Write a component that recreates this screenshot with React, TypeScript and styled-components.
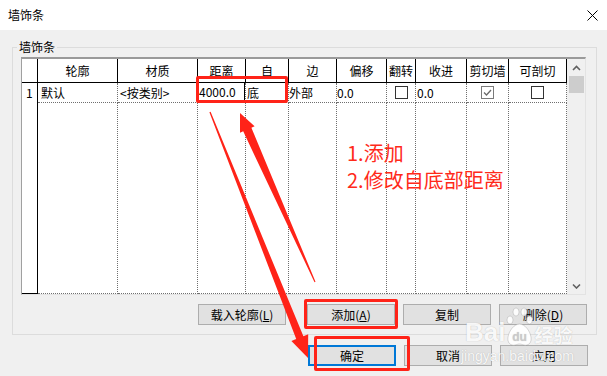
import styled, { createGlobalStyle } from "styled-components";

const GlobalStyle = createGlobalStyle`
  html, body {
    margin: 0;
    padding: 0;
    background: #f0f0f0;
  }
  body {
    font-family: "Noto Sans CJK SC", "Microsoft YaHei", sans-serif;
    font-size: 12px;
    color: #000;
  }
  * {
    box-sizing: border-box;
  }
`;

const Window = styled.div`
  position: relative;
  width: 607px;
  height: 376px;
  background: #f0f0f0;
  overflow: hidden;
`;

const TitleBar = styled.div`
  height: 30px;
  background: #fff;
  display: flex;
  align-items: center;
  justify-content: space-between;
  padding: 0 9px 0 8px;
  font-size: 12px;
  line-height: 14px;
`;

const Content = styled.div`
  padding: 10px 10px 0 12px;
`;

const GroupBox = styled.fieldset`
  margin: 0;
  width: 585px;
  min-width: 0;
  padding: 3px 10px 9px 8px;
  border: 1px solid #dcdcdc;
`;

const GroupLegend = styled.legend`
  margin-left: -4px;
  padding: 0 2px;
  font-size: 12px;
  line-height: 14px;
`;

const GridFrame = styled.div`
  display: flex;
  width: 565px;
  border-style: solid;
  border-width: 2px 1px 1px 1px;
  border-color: #9a9a9a #e3e3e3 #e3e3e3 #a0a0a0;
  background: #fff;
`;

const Table = styled.div`
  display: grid;
  grid-template-columns: 16px 80px 80px 48px 43px 48px 50px 29px 51px 42px 58px;
  grid-template-rows: 24px 20px 191px;
  width: 545px;
`;

const HeadCell = styled.div`
  border-right: 1px solid #000;
  border-bottom: 1px solid #000;
  text-align: center;
  line-height: 23px;
  white-space: nowrap;
  overflow: hidden;
`;

const RowHead = styled.div<{ $last?: boolean }>`
  border-right: 1px solid #000;
  border-bottom: ${(p) => (p.$last ? "1px solid #000" : "none")};
  padding-left: 4px;
  line-height: 19px;
`;

const Cell = styled.div<{ $pad?: number; $center?: boolean }>`
  display: flex;
  align-items: center;
  justify-content: ${(p) => (p.$center ? "center" : "flex-start")};
  border-right: 1px dotted #6f6f6f;
  border-bottom: 1px dotted #6f6f6f;
  padding-left: ${(p) => (p.$center ? 0 : p.$pad ?? 2)}px;
  line-height: 19px;
  white-space: nowrap;
`;

const EditBox = styled.div`
  align-self: flex-start;
  width: 49px;
  height: 20px;
  margin: -1px 0 0 -1px;
  padding-left: 1px;
  border: 1px solid #000;
  background: #fff;
  line-height: 18px;
`;

const CheckBox = styled.span<{ $checked?: boolean }>`
  display: inline-flex;
  align-items: center;
  justify-content: center;
  width: 13px;
  height: 13px;
  border: 1px solid ${(p) => (p.$checked ? "#7a7a7a" : "#333")};
  background: #fff;
`;

const ScrollBar = styled.div`
  width: 18px;
  display: flex;
  flex-direction: column;
  background: #f0f0f0;
`;

const ScrollArrow = styled.div`
  height: 17px;
  display: flex;
  align-items: center;
  justify-content: center;
`;

const ScrollThumb = styled.div`
  height: 17px;
  margin: 0 1px 0 2px;
  background: #cdcdcd;
`;

const ScrollTrack = styled.div`
  flex: 1;
`;

const ButtonRow = styled.div`
  display: flex;
  justify-content: flex-end;
  gap: 8px;
  margin: 9px -1px 0 0;
`;

const FooterRow = styled.div`
  display: flex;
  justify-content: flex-end;
  gap: 8px;
  margin-top: 10px;
  padding-right: 9px;
`;

const Button = styled.button<{ $default?: boolean }>`
  width: 88px;
  height: 21px;
  padding: 0;
  background: #e1e1e1;
  border: ${(p) => (p.$default ? "2px solid #0078d7" : "1px solid #adadad")};
  font-family: inherit;
  font-size: 12px;
  line-height: 14px;
  color: #000;
`;

const LoadButton = styled(Button)`
  margin-right: 13px;
`;

const Overlay = styled.div`
  position: absolute;
  inset: 0;
  pointer-events: none;
`;

const RedBox = styled.div<{ $x: number; $y: number; $w: number; $h: number }>`
  position: absolute;
  left: ${(p) => p.$x}px;
  top: ${(p) => p.$y}px;
  width: ${(p) => p.$w}px;
  height: ${(p) => p.$h}px;
  border: 3px solid #ff2318;
  border-radius: 2px;
`;

const Note = styled.div`
  position: absolute;
  left: 347px;
  top: 139px;
  color: #ff2a1a;
  font-size: 20px;
  line-height: 27px;
  white-space: nowrap;
`;

const ArrowLayer = styled.svg`
  position: absolute;
  left: 0;
  top: 0;
`;

const Watermark = styled.div`
  position: absolute;
  left: 461px;
  top: 303px;
  display: flex;
  flex-direction: column;
  color: rgba(255, 255, 255, 0.92);
  text-shadow: 0 0 1px rgba(110, 110, 110, 0.45);
  font-family: "Liberation Sans", Arial, sans-serif;
`;

const WmTop = styled.div`
  display: flex;
  align-items: flex-end;
  height: 44px;
`;

const WmBai = styled.span`
  font-size: 26px;
  font-weight: bold;
  line-height: 26px;
  margin: 0 1px 2px 4px;
`;

const WmJing = styled.span`
  font-family: "Noto Sans CJK SC", sans-serif;
  font-size: 19px;
  line-height: 24px;
  font-weight: bold;
  margin: 0 0 0 1px;
`;

const WmUrl = styled.span`
  font-size: 14px;
  line-height: 18px;
  margin-top: 0;
`;

const headers = ["轮廓", "材质", "距离", "自", "边", "偏移", "翻转", "收进", "剪切墙", "可剖切"];

const Check = () => (
  <svg width="9" height="7" viewBox="0 0 9 7">
    <polyline points="1,3.5 3.5,6 8,1" fill="none" stroke="#6a6a6a" strokeWidth="1.3" />
  </svg>
);

const Chevron = ({ down }: { down?: boolean }) => (
  <svg width="9" height="6" viewBox="0 0 9 6">
    <polyline
      points={down ? "1,1.5 4.5,5 8,1.5" : "1,5 4.5,1.5 8,5"}
      fill="none"
      stroke="#606060"
      strokeWidth="1.6"
    />
  </svg>
);

const App = () => {
  return (
    <Window>
      <GlobalStyle />
      <TitleBar>
        <span>墙饰条</span>
        <svg width="11" height="11" viewBox="0 0 11 11">
          <path d="M0.5 0.5 L10.5 10.5 M10.5 0.5 L0.5 10.5" stroke="#000" strokeWidth="1" />
        </svg>
      </TitleBar>
      <Content>
        <GroupBox>
          <GroupLegend>墙饰条</GroupLegend>
          <GridFrame>
            <Table>
              <HeadCell />
              {headers.map((h) => (
                <HeadCell key={h}>{h}</HeadCell>
              ))}

              <RowHead>1</RowHead>
              <Cell $pad={3}>默认</Cell>
              <Cell $pad={2}>&lt;按类别&gt;</Cell>
              <Cell $pad={0}>
                <EditBox>4000.0</EditBox>
              </Cell>
              <Cell $pad={1}>底</Cell>
              <Cell $pad={0}>外部</Cell>
              <Cell $pad={0}>0.0</Cell>
              <Cell $center>
                <CheckBox />
              </Cell>
              <Cell $pad={1}>0.0</Cell>
              <Cell $center>
                <CheckBox $checked>
                  <Check />
                </CheckBox>
              </Cell>
              <Cell $center>
                <CheckBox />
              </Cell>

              <RowHead $last />
              {headers.map((h) => (
                <Cell key={"f" + h} />
              ))}
            </Table>
            <ScrollBar>
              <ScrollArrow>
                <Chevron />
              </ScrollArrow>
              <ScrollThumb />
              <ScrollTrack />
              <ScrollArrow>
                <Chevron down />
              </ScrollArrow>
            </ScrollBar>
          </GridFrame>
          <ButtonRow>
            <LoadButton>
              载入轮廓(<u>L</u>)
            </LoadButton>
            <Button>
              添加(<u>A</u>)
            </Button>
            <Button>复制</Button>
            <Button>
              删除(<u>D</u>)
            </Button>
          </ButtonRow>
        </GroupBox>
        <FooterRow>
          <Button $default>确定</Button>
          <Button>取消</Button>
          <Button>应用</Button>
        </FooterRow>
      </Content>

      <Overlay>
        <Watermark>
          <WmTop>
            <WmBai>Bai</WmBai>
            <svg width="27" height="40" viewBox="0 0 27 40">
              <g fill="rgba(255,255,255,0.9)" stroke="rgba(120,120,120,0.35)" strokeWidth="0.8">
                <ellipse cx="4" cy="13" rx="3" ry="4" />
                <ellipse cx="10" cy="5" rx="3" ry="4" />
                <ellipse cx="18" cy="5" rx="3" ry="4" />
                <ellipse cx="23.5" cy="13" rx="3" ry="4" />
                <path d="M13.5 17 C8 17 3 24 2 30 C1 36 5 39 9 38 C11 37.5 12 37 13.5 37 C15 37 16 37.5 18 38 C22 39 26 36 25 30 C24 24 19 17 13.5 17 Z" />
              </g>
              <text
                x="13.5"
                y="34"
                textAnchor="middle"
                fontFamily="Liberation Sans, sans-serif"
                fontWeight="bold"
                fontSize="12"
                fill="rgba(200,200,200,0.8)"
              >
                du
              </text>
            </svg>
            <WmJing>经验</WmJing>
          </WmTop>
          <WmUrl>jingyan.baidu.com</WmUrl>
        </Watermark>

        <RedBox $x={196} $y={76} $w={92} $h={27} />
        <RedBox $x={304} $y={299} $w={94} $h={30} />
        <RedBox $x={314} $y={336} $w={96} $h={35} />

        <Note>
          1.添加
          <br />
          2.修改自底部距离
        </Note>

        <ArrowLayer width="607" height="376" viewBox="0 0 607 376">
          <polygon
            fill="#ff2318"
            points="209.4,112.3 296.2,339 291.4,340.9 308,358 308.2,334.3 303.4,336.3 210.6,111.7"
          />
          <polygon
            fill="#ff2318"
            points="315.5,281.8 251.4,127.7 254.6,126.3 240,113 240,132.7 243.2,131.3 314.5,282.2"
          />
        </ArrowLayer>
      </Overlay>
    </Window>
  );
};

export default App;
